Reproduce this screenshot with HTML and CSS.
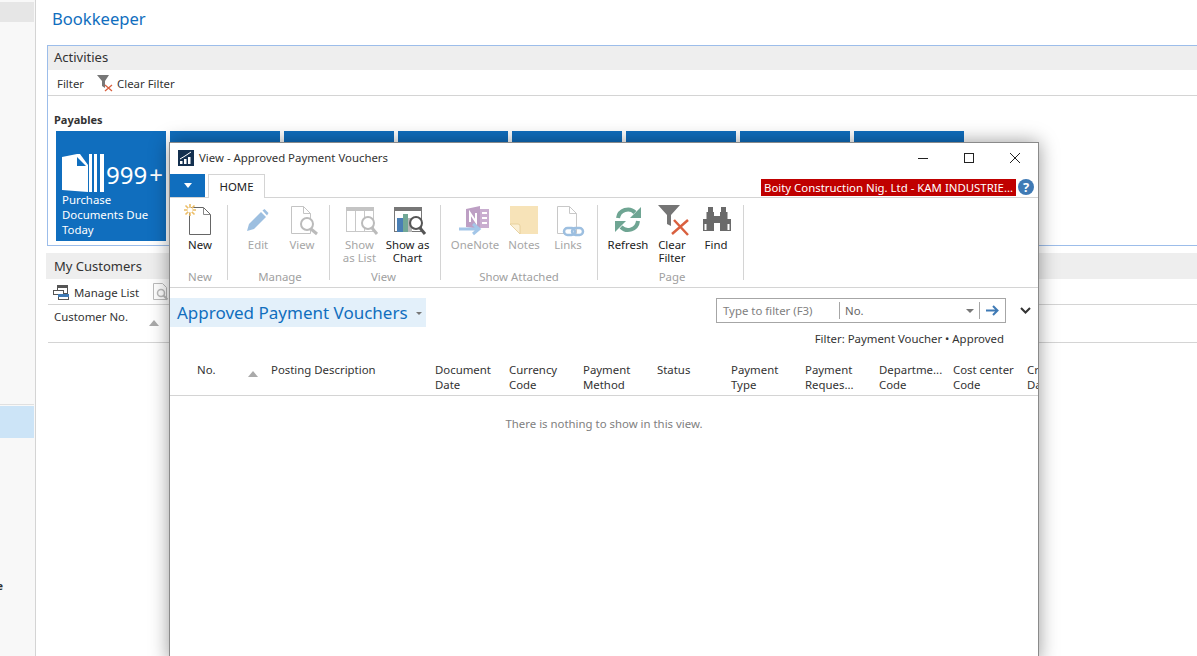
FILE: index.html
```html
<!DOCTYPE html>
<html lang="en">
<head>
  <meta charset="UTF-8" />
  <title>Bookkeeper</title>
  <link rel="stylesheet" href="styles.css">
</head>
<body>

<div class="page">
  <aside class="sidebar">
    <div class="side-top"></div>
    <div class="side-line"></div>
    <div class="side-selected"></div>
    <div class="side-text">Finance</div>
  </aside>

  <main class="main">
    <h1 class="role-title">Bookkeeper</h1>

    <section class="activities">
      <div class="part-title">Activities</div>
      <div class="part-tools">
        <span>Filter</span>
        <svg class="tool-icon" width="17" height="17" viewBox="0 0 17 17">
          <path d="M0 0h12L8 6v7L5 11V6z" fill="#777"/>
          <path d="M8 10l7 6M15 10l-7 6" stroke="#d9603f" stroke-width="1.300" fill="none"/>
        </svg>
        <span>Clear Filter</span>
      </div>
      <h3 class="cue-title">Payables</h3>
      <div class="cues">
        <div class="cue">
          <div class="cue-top">
            <svg width="42" height="38" viewBox="0 0 42 38">
              <path d="M0 3L15 0H18L26 11V38L0 36z" fill="#fff"/>
              <path d="M15 3V12H24z" fill="#106ebe"/>
              <rect x="27" y="0" width="3" height="38" fill="#fff"/>
              <rect x="32" y="0" width="3" height="38" fill="#fff"/>
              <rect x="38" y="0" width="4" height="38" fill="#fff"/>
            </svg>
            <span class="cue-num">999<span class="cue-plus">+</span></span>
          </div>
          <div class="cue-label">Purchase Documents Due Today</div>
        </div>
        <div class="cue"></div>
        <div class="cue"></div>
        <div class="cue"></div>
        <div class="cue"></div>
        <div class="cue"></div>
        <div class="cue"></div>
        <div class="cue"></div>
      </div>
    </section>

    <section class="customers">
      <div class="part-title">My Customers</div>
      <div class="part-tools">
        <svg width="16" height="15" viewBox="0 0 16 15">
          <rect x="4.500" y="0.500" width="10" height="8" fill="#fff" stroke="#555"/>
          <rect x="4" y="0" width="11" height="3" fill="#555"/>
          <rect x="0.500" y="5.500" width="10" height="4" fill="#fff" stroke="#555"/>
          <rect x="5.500" y="9.500" width="10" height="5" fill="#fff" stroke="#555"/>
          <rect x="5" y="9" width="11" height="3" fill="#3f7ab5"/>
        </svg>
        <span>Manage List</span>
        <svg class="view-small" width="15" height="18" viewBox="0 0 15 18">
          <path d="M.5.500h9l4 4v12H.5z" fill="#fff" stroke="#bbb"/>
          <circle cx="8" cy="10" r="3.500" fill="#fff" stroke="#bbb" stroke-width="1.500"/>
          <path d="M10.500 12.500l4 4" stroke="#bbb" stroke-width="2"/>
        </svg>
      </div>
      <div class="customer-head">
        <span>Customer No.</span>
        <i class="sort-arrow"></i>
      </div>
    </section>
  </main>
</div>

<!-- dialog window on top of the role centre -->
<div class="window">
  <div class="win-title">
    <svg width="16" height="16" viewBox="0 0 16 16">
      <rect width="16" height="16" fill="#14304f"/>
      <path d="M2 14v-3h2.500v3zM6 14V9h2.500v5zM10 14V7h2.500v7z" fill="#fff"/>
      <path d="M2 9l5-3 6-4" stroke="#fff" fill="none"/>
    </svg>
    <span class="win-name">View - Approved Payment Vouchers</span>
    <div class="win-btns">
      <svg width="12" height="12" viewBox="0 0 12 12"><path d="M1 6.500h10" stroke="#222"/></svg>
      <svg width="12" height="12" viewBox="0 0 12 12"><rect x="1.500" y="1.500" width="9" height="9" fill="none" stroke="#222"/></svg>
      <svg width="12" height="12" viewBox="0 0 12 12"><path d="M1 1l10 10M11 1L1 11" stroke="#222"/></svg>
    </div>
  </div>

  <div class="tab-row">
    <div class="app-btn"><i></i></div>
    <div class="tab">HOME</div>
    <div class="company">Boity Construction Nig. Ltd - KAM INDUSTRIE...</div>
    <div class="help">?</div>
  </div>

  <div class="ribbon">
    <div class="group g-new">
      <div class="btns">
        <div class="rbtn">
          <svg width="32" height="32" viewBox="0 0 32 32">
            <path d="M5.500 2.500h14l7 7v20h-21z" fill="#fff" stroke="#666"/>
            <path d="M19.500 2.500v7h7" fill="none" stroke="#888"/>
            <path d="M6 -1v12M0 5h12M1.500 .5l9 9M10.500 .5l-9 9" stroke="#ecbd66" stroke-width="1.600"/>
            <circle cx="6" cy="5" r="2.500" fill="#fff"/>
          </svg>
          <span>New</span>
        </div>
      </div>
      <div class="group-name">New</div>
    </div>

    <div class="group g-manage">
      <div class="btns">
        <div class="rbtn off">
          <svg width="32" height="32" viewBox="0 0 32 32">
            <path d="M5 26l2-7L19 7l5 5L12 24z" fill="#9dbfe0"/>
            <path d="M20.500 5.500l2-1.500 4 4-1.500 2.500z" fill="#9dbfe0"/>
          </svg>
          <span>Edit</span>
        </div>
        <div class="rbtn off">
          <svg width="32" height="32" viewBox="0 0 32 32">
            <path d="M5.500 1.500h12l7 7v20h-19z" fill="#fff" stroke="#c4c4c4"/>
            <path d="M17.500 1.500v7h7" fill="none" stroke="#c4c4c4"/>
            <circle cx="21" cy="19" r="6" fill="#fff" stroke="#bbb" stroke-width="2"/>
            <path d="M25 24l6 5" stroke="#bbb" stroke-width="3"/>
          </svg>
          <span>View</span>
        </div>
      </div>
      <div class="group-name">Manage</div>
    </div>

    <div class="group g-view">
      <div class="btns">
        <div class="rbtn off">
          <svg width="32" height="32" viewBox="0 0 32 32">
            <rect x="2.500" y="2.500" width="27" height="24" fill="#fff" stroke="#c8c8c8"/>
            <rect x="2" y="2" width="28" height="4" fill="#c4c4c4"/>
            <path d="M11.500 6v20M20.500 6v20" stroke="#c8c8c8"/>
            <circle cx="24" cy="18" r="6" fill="#fff" stroke="#bbb" stroke-width="2"/>
            <path d="M28 23l5 6" stroke="#bbb" stroke-width="3"/>
          </svg>
          <span>Show<br>as List</span>
        </div>
        <div class="rbtn">
          <svg width="32" height="32" viewBox="0 0 32 32">
            <rect x="2.500" y="2.500" width="27" height="24" fill="#fff" stroke="#777"/>
            <rect x="2" y="2" width="28" height="4" fill="#777"/>
            <rect x="5" y="13" width="6" height="14" fill="#4a7fb5"/>
            <rect x="11" y="9" width="5" height="18" fill="#72a896"/>
            <rect x="16" y="13" width="4" height="14" fill="#b9b9b9"/>
            <circle cx="24" cy="18" r="6" fill="#fff" fill-opacity=".7" stroke="#555" stroke-width="2"/>
            <path d="M28 23l5 6" stroke="#555" stroke-width="3"/>
          </svg>
          <span>Show as<br>Chart</span>
        </div>
      </div>
      <div class="group-name">View</div>
    </div>

    <div class="group g-attach">
      <div class="btns">
        <div class="rbtn off wide">
          <svg width="32" height="32" viewBox="0 0 32 32">
            <path d="M21 4h9v19h-9z" fill="#c9aed0"/>
            <path d="M7 4l14-3v23l-14-2z" fill="#bd9fc4"/>
            <path d="M11 17V8l6 9V8" stroke="#fff" stroke-width="2" fill="none"/>
            <path d="M23 8h5M23 13h5M23 18h5" stroke="#fff" stroke-width="2"/>
            <path d="M0 24h20M14 19l6 5-6 5" stroke="#a3c6e8" stroke-width="3" fill="none"/>
          </svg>
          <span>OneNote</span>
        </div>
        <div class="rbtn off">
          <svg width="32" height="32" viewBox="0 0 32 32">
            <path d="M2 1h28v28H12L2 19z" fill="#f7e3b8"/>
            <path d="M2 19h8q2 0 2 2v8z" fill="#fbefd4" stroke="#e3cc96" stroke-width=".8"/>
          </svg>
          <span>Notes</span>
        </div>
        <div class="rbtn off">
          <svg width="32" height="32" viewBox="0 0 32 32">
            <path d="M5.500 1.500h12l7 7v20h-19z" fill="#fff" stroke="#c8c8c8"/>
            <path d="M17.500 1.500v7h7" fill="none" stroke="#c8c8c8"/>
            <rect x="12" y="23" width="11" height="7" rx="3.500" fill="#fff" stroke="#9dbfe0" stroke-width="2.500"/>
            <rect x="20" y="23" width="11" height="7" rx="3.500" fill="none" stroke="#9dbfe0" stroke-width="2.500"/>
          </svg>
          <span>Links</span>
        </div>
      </div>
      <div class="group-name">Show Attached</div>
    </div>

    <div class="group g-page">
      <div class="btns">
        <div class="rbtn">
          <svg width="32" height="32" viewBox="0 0 32 32">
            <path d="M6 13A10 10 0 0 1 23 7.500" fill="none" stroke="#6fa593" stroke-width="4"/>
            <path d="M29 2v11H18z" fill="#6fa593"/>
            <path d="M26 16A10 10 0 0 1 9 22" fill="none" stroke="#6fa593" stroke-width="4"/>
            <path d="M3 27V16h11z" fill="#6fa593"/>
          </svg>
          <span>Refresh</span>
        </div>
        <div class="rbtn">
          <svg width="32" height="32" viewBox="0 0 32 32">
            <path d="M2 0h22l-9 10v11l-4-2V10z" fill="#757575"/>
            <path d="M16 29L32 15M18 15l14 15" stroke="#d9603f" stroke-width="2.500"/>
          </svg>
          <span>Clear<br>Filter</span>
        </div>
        <div class="rbtn">
          <svg width="32" height="32" viewBox="0 0 32 32">
            <path d="M8 2h5v5h1v19H3V14h3.500V7H8z" fill="#6a6a6a"/>
            <path d="M26 2h-5v5h-1v19h11V14h-3.500V7H26z" fill="#6a6a6a"/>
            <rect x="14" y="11" width="6" height="7" fill="#6a6a6a"/>
            <path d="M5.500 19v6M28.500 19v6" stroke="#fff" stroke-width="2"/>
          </svg>
          <span>Find</span>
        </div>
      </div>
      <div class="group-name">Page</div>
    </div>
  </div>

  <div class="list-head">
    <div class="list-title">Approved Payment Vouchers <i></i></div>
    <div class="list-right">
      <div class="filter-row">
        <div class="filter-box">
          <span class="filter-hint">Type to filter (F3)</span>
          <span class="filter-field">No.</span>
          <i class="filter-caret"></i>
          <svg class="filter-go" width="13" height="11" viewBox="0 0 13 11">
            <path d="M0 5.500h11M7 1l4.500 4.500L7 10" fill="none" stroke="#3f7ab5" stroke-width="2"/>
          </svg>
        </div>
        <svg class="chevron" width="11" height="7" viewBox="0 0 11 7">
          <path d="M1 1l4.500 4.500L10 1" fill="none" stroke="#333" stroke-width="2"/>
        </svg>
      </div>
      <div class="filter-note">Filter: Payment Voucher • Approved</div>
    </div>
  </div>

  <div class="grid-head">
    <div class="col-no">No.<i class="sort-arrow"></i></div>
    <div class="col-desc">Posting Description</div>
    <div>Document Date</div>
    <div>Currency Code</div>
    <div>Payment Method</div>
    <div>Status</div>
    <div>Payment Type</div>
    <div>Payment<br>Reques...</div>
    <div>Departme...<br>Code</div>
    <div>Cost center Code</div>
    <div>Created Date</div>
  </div>
  <div class="empty">There is nothing to show in this view.</div>
</div>

</body>
</html>
```

FILE: styles.css
```css
* {
  box-sizing: border-box;
}

html, body {
  height: 100%;
}

body {
  margin: 0;
  overflow: hidden;
  background-color: #ffffff;
  font-family: "Noto Sans", "Open Sans", sans-serif;
  font-size: 11.400px;
  color: #333333;
}

svg {
  overflow: visible;
}

.page {
  display: flex;
  height: 656px;
}

.sidebar {
  width: 36px;
  flex: none;
  padding: 2px 1px 0 0;
  overflow: hidden;
  background-color: #f8f8f8;
  border-right: 1px solid #d4d4d4;
}

.side-top {
  height: 20px;
  background-color: #e6e6e6;
}

.side-line {
  height: 1px;
  margin-top: 382px;
  background-color: #e0e0e0;
}

.side-selected {
  height: 32px;
  margin-top: 1px;
  background-color: #cce4f7;
}

.side-text {
  display: flex;
  justify-content: flex-end;
  margin-top: 140px;
  padding-right: 31px;
  white-space: nowrap;
  font-weight: bold;
}

.main {
  flex: 1;
  min-width: 0;
  padding-left: 10px;
}

.role-title {
  margin: 0;
  padding: 7px 0 0 6px;
  height: 45px;
  font-size: 16.600px;
  font-weight: normal;
  color: #106ebe;
}

.activities {
  height: 201px;
  margin-left: 1px;
  border: 1px solid #9cbdea;
  border-right: none;
}

.part-title {
  height: 24px;
  padding-left: 6px;
  font-size: 13px;
  line-height: 23px;
  background-color: #eeeeee;
}

.part-tools {
  display: flex;
  align-items: center;
  height: 26px;
  padding: 1px 0 0 9px;
  border-bottom: 1px solid #d4d4d4;
}

.tool-icon {
  margin: 0 3px 0 13px;
}

.cue-title {
  margin: 16px 0 0 6px;
  font-size: 11px;
  line-height: 16px;
}

.cues {
  display: flex;
  gap: 4px;
  margin: 3px 0 0 8px;
}

.cue {
  width: 110px;
  height: 110px;
  padding: 23px 0 0 6px;
  color: #ffffff;
  background-color: #106ebe;
}

.cue-top {
  display: flex;
  align-items: center;
  height: 38px;
}

.cue-num {
  margin: 4px 0 0 2px;
  font-size: 24px;
  line-height: 38px;
}

.cue-plus {
  margin-left: 2px;
}

.cue-label {
  width: 100px;
  line-height: 15px;
}

.customers {
  margin-top: 7px;
}

.customers .part-title {
  height: 26px;
  line-height: 26px;
  padding-left: 8px;
}

.customers .part-tools {
  margin-left: 2px;
  padding-left: 5px;
  gap: 5px;
}

.view-small {
  margin-left: 9px;
}

.customer-head {
  position: relative;
  height: 38px;
  margin-left: 2px;
  padding: 4px 0 0 6px;
  border-bottom: 1px solid #d4d4d4;
}

.sort-arrow {
  display: inline-block;
  width: 0;
  height: 0;
  border-left: 5px solid transparent;
  border-right: 5px solid transparent;
  border-bottom: 6px solid #aaaaaa;
}

.customer-head .sort-arrow {
  position: absolute;
  left: 101px;
  top: 15px;
}

.window {
  position: absolute;
  left: 169px;
  top: 142px;
  width: 870px;
  height: 520px;
  overflow: hidden;
  background-color: #ffffff;
  border: 1px solid #8a8a8a;
  box-shadow: 0 0 18px rgba(0, 0, 0, 0.4);
}

.win-title {
  display: flex;
  align-items: center;
  height: 31px;
  padding: 0 0 2px 8px;
}

.win-name {
  margin-left: 5px;
}

.win-btns {
  display: flex;
  gap: 34px;
  margin-left: auto;
  padding-right: 17px;
}

.tab-row {
  display: flex;
  align-items: flex-end;
  height: 23px;
}

.app-btn {
  display: flex;
  align-items: center;
  justify-content: center;
  width: 35px;
  height: 23px;
  background-color: #106ebe;
}

.app-btn i {
  border-left: 4px solid transparent;
  border-right: 4px solid transparent;
  border-top: 5px solid #ffffff;
}

.tab {
  position: relative;
  width: 57px;
  height: 24px;
  margin: 0 0 -1px 3px;
  text-align: center;
  line-height: 24px;
  color: #222222;
  background-color: #ffffff;
  border: 1px solid #d4d4d4;
  border-bottom: none;
}

.company {
  width: 255px;
  height: 17px;
  margin: 0 0 1px auto;
  padding-left: 3px;
  overflow: hidden;
  white-space: nowrap;
  line-height: 18px;
  color: #ffffff;
  background-color: #c00000;
}

.help {
  width: 16px;
  height: 16px;
  margin: 0 4px 2px 2px;
  border-radius: 50%;
  text-align: center;
  font-size: 13px;
  font-weight: bold;
  line-height: 16px;
  color: #ffffff;
  background-color: #3f7ab5;
}

.ribbon {
  display: flex;
  height: 91px;
  padding-top: 7px;
  border-top: 1px solid #d4d4d4;
  border-bottom: 1px solid #d4d4d4;
}

.group {
  display: flex;
  flex-direction: column;
  height: 75px;
  border-right: 1px solid #d4d4d4;
}

.g-new { width: 58px; padding-left: 3px; }
.g-manage { width: 102px; padding-left: 3px; }
.g-view { width: 111px; padding-right: 3px; }
.g-attach { width: 157px; }
.g-page { width: 146px; padding-left: 3px; }

.g-view .rbtn {
  width: 48px;
}

.btns {
  display: flex;
  justify-content: center;
  flex: 1;
}

.group-name {
  margin-bottom: -4px;
  text-align: center;
  color: #a0a0a0;
  line-height: 15px;
}

.rbtn {
  display: flex;
  flex-direction: column;
  align-items: center;
  width: 44px;
  color: #222222;
  text-align: center;
  line-height: 13px;
  white-space: nowrap;
}

.rbtn svg {
  margin-bottom: 1px;
}

.rbtn.off {
  color: #a6a6a6;
}

.rbtn.wide {
  width: 54px;
}

.list-head {
  display: flex;
  justify-content: space-between;
  height: 74px;
  padding-top: 10px;
}

.list-title {
  align-self: flex-start;
  width: 256px;
  height: 29px;
  padding-left: 7px;
  font-size: 17px;
  line-height: 30px;
  white-space: nowrap;
  color: #106ebe;
  background-color: #e3f0fa;
}

.list-title i {
  display: inline-block;
  margin: 0 0 4px 4px;
  border-left: 3px solid transparent;
  border-right: 3px solid transparent;
  border-top: 3px solid #777777;
}

.list-right {
  padding-right: 7px;
}

.filter-row {
  display: flex;
  align-items: center;
  gap: 14px;
}

.filter-box {
  display: flex;
  align-items: center;
  width: 290px;
  height: 25px;
  border: 1px solid #a6a6a6;
}

.filter-hint {
  width: 123px;
  padding: 1px 0 1px 6px;
  color: #808080;
  border-right: 1px solid #a6a6a6;
}

.filter-field {
  flex: 1;
  padding-left: 5px;
  color: #666666;
}

.filter-caret {
  margin-right: 5px;
  border-left: 4px solid transparent;
  border-right: 4px solid transparent;
  border-top: 4px solid #777777;
}

.filter-go {
  box-sizing: content-box;
  padding: 3px 6px;
  border-left: 1px solid #a6a6a6;
}

.filter-note {
  margin: 8px 27px 0 0;
  text-align: right;
}

.grid-head {
  display: grid;
  grid-template-columns: 74px 164px repeat(9, 74px);
  height: 34px;
  padding-left: 27px;
  line-height: 15px;
  border-bottom: 1px solid #d4d4d4;
}

.grid-head > div {
  padding-right: 4px;
}

.col-no {
  position: relative;
}

.col-no .sort-arrow {
  position: absolute;
  left: 51px;
  top: 9px;
}

.empty {
  padding-top: 20px;
  text-align: center;
  color: #808080;
}
```
